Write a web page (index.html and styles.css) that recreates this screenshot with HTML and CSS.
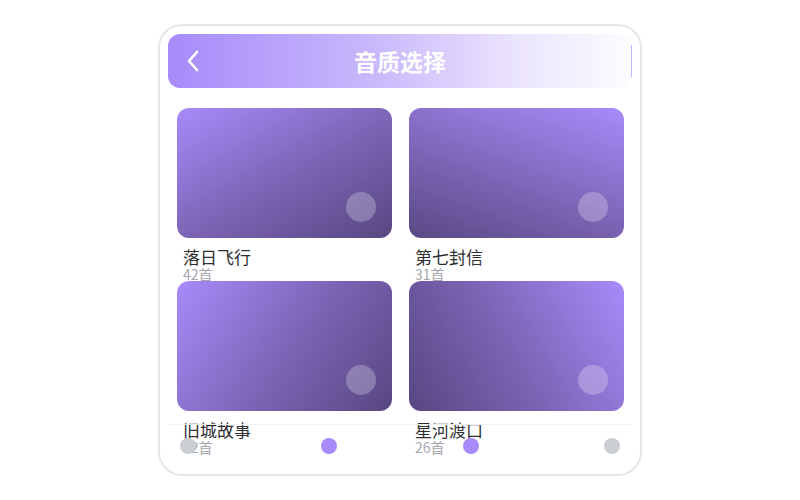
FILE: index.html
```html
<!DOCTYPE html>
<html>
<head>
    <title>音质选择</title>
    <link rel="stylesheet" href="styles.css">
</head>

<body>
    <div class="phone">
        <div class="header">
            <span class="back">
                <svg width="14" height="22" viewBox="0 0 14 22">
                    <path d="M11 2 L3 11 L11 20" fill="none" stroke="#fff" stroke-width="2.6" stroke-linecap="round" stroke-linejoin="round"/>
                </svg>
            </span>
            <h1 class="title">音质选择</h1>
            <span class="header-side"></span>
        </div>

        <div class="album-grid">
            <div class="album">
                <div class="cover cover-1"><span class="play-dot"></span></div>
                <div class="album-name">落日飞行</div>
                <div class="album-count">42首</div>
            </div>
            <div class="album">
                <div class="cover cover-2"><span class="play-dot"></span></div>
                <div class="album-name">第七封信</div>
                <div class="album-count">31首</div>
            </div>
            <div class="album">
                <div class="cover cover-3"><span class="play-dot"></span></div>
                <div class="album-name">旧城故事</div>
                <div class="album-count">42首</div>
            </div>
            <div class="album">
                <div class="cover cover-4"><span class="play-dot"></span></div>
                <div class="album-name">星河渡口</div>
                <div class="album-count">26首</div>
            </div>
        </div>

        <div class="tab-bar">
            <span class="tab-dot"></span>
            <span class="tab-dot active"></span>
            <span class="tab-dot active"></span>
            <span class="tab-dot"></span>
        </div>
    </div>
</body>

</html>
```

FILE: styles.css
```css
body {
    margin: 0;
    background: #fff;
    font-family: "Noto Sans CJK SC", "Noto Sans", sans-serif;
}

.phone {
    box-sizing: border-box;
    width: 484px;
    height: 452px;
    margin: 24px auto 0;
    padding: 8px;
    border: 2px solid #e6e6ea;
    border-radius: 24px;
    background: #fff;
}

.header {
    display: flex;
    align-items: center;
    height: 54px;
    border-radius: 12px;
    background: linear-gradient(90deg, #a78bfa 0%, #c9b9fc 45%, #ebe4fd 75%, #fdfcff 100%);
}

.back {
    display: flex;
    width: 14px;
    margin-left: 18px;
}

.title {
    flex: 1;
    margin: 0;
    padding-right: 31px;
    color: #fff;
    font-size: 23px;
    font-weight: 700;
    line-height: 30px;
    text-align: center;
}

.header-side {
    width: 1px;
    height: 32px;
    background: #c4b5fd;
}

.album-grid {
    display: grid;
    grid-template-columns: 1fr 1fr;
    grid-auto-rows: 173px;
    column-gap: 17px;
    height: 316px;
    margin-top: 20px;
    padding: 0 8px 0 9px;
}

.album {
    min-width: 0;
}

.cover {
    position: relative;
    height: 130px;
    border-radius: 12px;
}

.cover-1 {
    background: linear-gradient(150deg, #a78bfa 0%, #7e66b8 50%, #584782 100%);
}

.cover-2 {
    background: linear-gradient(200deg, #a78bfa 0%, #7e66b8 55%, #5a4985 100%);
}

.cover-3 {
    background: linear-gradient(125deg, #a78bfa 0%, #7e66b8 50%, #584782 100%);
}

.cover-4 {
    background: linear-gradient(240deg, #a78bfa 0%, #7e66b8 50%, #584782 100%);
}

.play-dot {
    position: absolute;
    right: 16px;
    bottom: 16px;
    width: 30px;
    height: 30px;
    border-radius: 50%;
    background: rgba(255, 255, 255, 0.25);
}

.album-name {
    margin-top: 10px;
    padding-left: 6px;
    color: #2f2f33;
    font-size: 17px;
    line-height: 18px;
}

.album-count {
    padding-left: 6px;
    color: #a3a7ad;
    font-size: 14px;
    line-height: 16px;
}

.tab-bar {
    position: relative;
    z-index: 1;
    display: flex;
    justify-content: space-between;
    margin: 0 2px;
    padding: 13px 10px 0;
    border-top: 1px solid #eef0f2;
}

.tab-dot {
    width: 16px;
    height: 16px;
    border-radius: 50%;
    background: #cbcfd4;
}

.tab-dot.active {
    background: #a78bfa;
}
```
